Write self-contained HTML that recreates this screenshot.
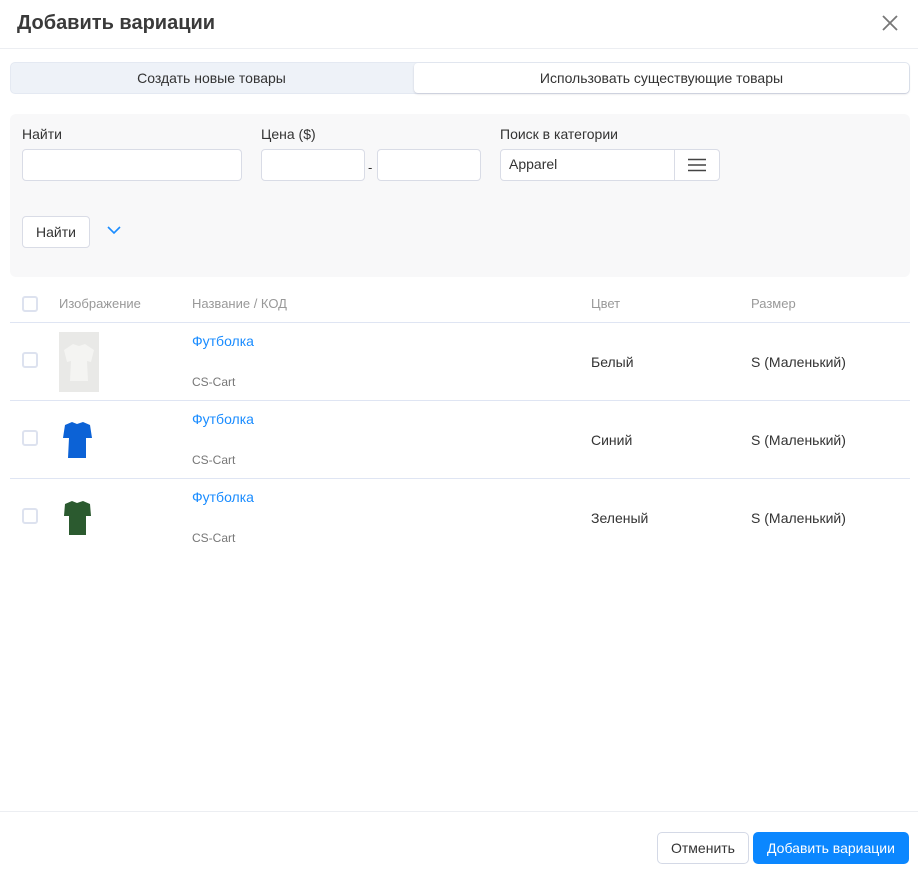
<!DOCTYPE html>
<html><head><meta charset="utf-8"><style>
*{box-sizing:border-box;margin:0;padding:0}
body{width:918px;height:880px;background:#fff;font-family:"Liberation Sans",sans-serif;color:#333;position:relative;overflow:hidden;font-size:14px}
.abs{position:absolute}
.inp{position:absolute;height:32px;border:1px solid #d9dce6;border-radius:4px;background:#fff}
.lbl{position:absolute;font-size:14px;color:#333}
.cb{position:absolute;width:16px;height:16px;border:2px solid #dde2ef;border-radius:3px;background:#fff}
.th{position:absolute;top:296px;font-size:13px;color:#999}
.line{position:absolute;left:10px;width:900px;height:1px;background:#dfe5f3}
.name{position:absolute;left:192px;color:#1a8cff;font-size:14px}
.code{position:absolute;left:192px;color:#777;font-size:12px}
.cell{position:absolute;font-size:14px;color:#333}
</style></head><body>
<div class="abs" style="left:17px;top:12px;font-size:20px;font-weight:bold;color:#3a3a3a">Добавить вариации</div>
<svg class="abs" style="left:881px;top:14px" width="18" height="18"><path d="M2 2L16 16M16 2L2 16" stroke="#777" stroke-width="1.8"/></svg>
<div class="abs" style="left:0;top:48px;width:918px;height:1px;background:#eceef2"></div>

<div class="abs" style="left:10px;top:62px;width:900px;height:32px;background:#eef2f8;border-radius:5px;border:1px solid #e4e9f2"></div>
<div class="abs" style="left:10px;top:70px;width:403px;text-align:center;font-size:14px;color:#333">Создать новые товары</div>
<div class="abs" style="left:414px;top:63px;width:495px;height:30px;background:#fff;border-radius:4px;box-shadow:0 1px 2px rgba(0,0,50,.15)"></div>
<div class="abs" style="left:414px;top:70px;width:495px;text-align:center;font-size:14px;color:#333">Использовать существующие товары</div>

<div class="abs" style="left:10px;top:114px;width:900px;height:163px;background:#f8f8f9;border-radius:6px"></div>
<div class="lbl" style="left:22px;top:126px">Найти</div>
<div class="lbl" style="left:261px;top:126px">Цена ($)</div>
<div class="lbl" style="left:500px;top:126px">Поиск в категории</div>
<div class="inp" style="left:22px;top:149px;width:220px"></div>
<div class="inp" style="left:261px;top:149px;width:104px"></div>
<div class="abs" style="left:368px;top:160px;font-size:13px">-</div>
<div class="inp" style="left:377px;top:149px;width:104px"></div>
<div class="inp" style="left:500px;top:149px;width:220px"></div>
<div class="abs" style="left:509px;top:156px;font-size:14px">Apparel</div>
<div class="abs" style="left:674px;top:149px;width:1px;height:32px;background:#d9dce6"></div>
<svg class="abs" style="left:688px;top:158px" width="18" height="14"><path d="M0 1.5H18M0 7H18M0 12.5H18" stroke="#444" stroke-width="1.6"/></svg>
<div class="inp" style="left:22px;top:216px;width:68px;height:32px"></div>
<div class="abs" style="left:22px;top:224px;width:68px;text-align:center;font-size:14px">Найти</div>
<svg class="abs" style="left:107px;top:225px" width="14" height="10"><path d="M1 2L7 8L13 2" stroke="#1a8cff" stroke-width="1.6" fill="none"/></svg>

<div class="cb" style="left:22px;top:296px"></div>
<div class="th" style="left:59px">Изображение</div>
<div class="th" style="left:192px">Название / КОД</div>
<div class="th" style="left:591px">Цвет</div>
<div class="th" style="left:751px">Размер</div>
<div class="line" style="top:322px"></div>

<div class="cb" style="left:22px;top:352px"></div>
<div class="abs" style="left:59px;top:332px;width:40px;height:60px;background:#e9e9e7"></div>
<svg class="abs" style="left:59px;top:332px" width="40" height="60"><path d="M14 12L5 18L8 30L12 29L11 49L29 49L28 29L32 30L35 18L26 12L20 14Z" fill="#f4f4f2"/></svg>
<div class="name" style="top:333px">Футболка</div>
<div class="code" style="top:375px">CS-Cart</div>
<div class="cell" style="left:591px;top:354px">Белый</div>
<div class="cell" style="left:751px;top:354px">S (Маленький)</div>
<div class="line" style="top:400px"></div>

<div class="cb" style="left:22px;top:430px"></div>
<svg class="abs" style="left:59px;top:418px" width="40" height="44"><path d="M13 4L6 7L4 20L10 20L9 40L27 40L27 20L33 20L31 7L24 4L18 6Z" fill="#0c62d6"/></svg>
<div class="name" style="top:411px">Футболка</div>
<div class="code" style="top:453px">CS-Cart</div>
<div class="cell" style="left:591px;top:432px">Синий</div>
<div class="cell" style="left:751px;top:432px">S (Маленький)</div>
<div class="line" style="top:478px"></div>

<div class="cb" style="left:22px;top:508px"></div>
<svg class="abs" style="left:59px;top:497px" width="40" height="42"><path d="M13 4L6 7L5 19L10 19L10 38L27 38L27 19L32 19L31 7L24 4L18 6Z" fill="#2b5a2f"/></svg>
<div class="name" style="top:489px">Футболка</div>
<div class="code" style="top:531px">CS-Cart</div>
<div class="cell" style="left:591px;top:510px">Зеленый</div>
<div class="cell" style="left:751px;top:510px">S (Маленький)</div>

<div class="abs" style="left:0;top:811px;width:918px;height:1px;background:#eceef2"></div>
<div class="abs" style="left:657px;top:832px;width:92px;height:32px;border:1px solid #d4d9e6;border-radius:5px;background:#fff;text-align:center;line-height:30px;font-size:14px;color:#333">Отменить</div>
<div class="abs" style="left:753px;top:832px;width:156px;height:32px;border-radius:5px;background:#0b87ff;text-align:center;line-height:32px;font-size:14px;color:#fff">Добавить вариации</div>
</body></html>
